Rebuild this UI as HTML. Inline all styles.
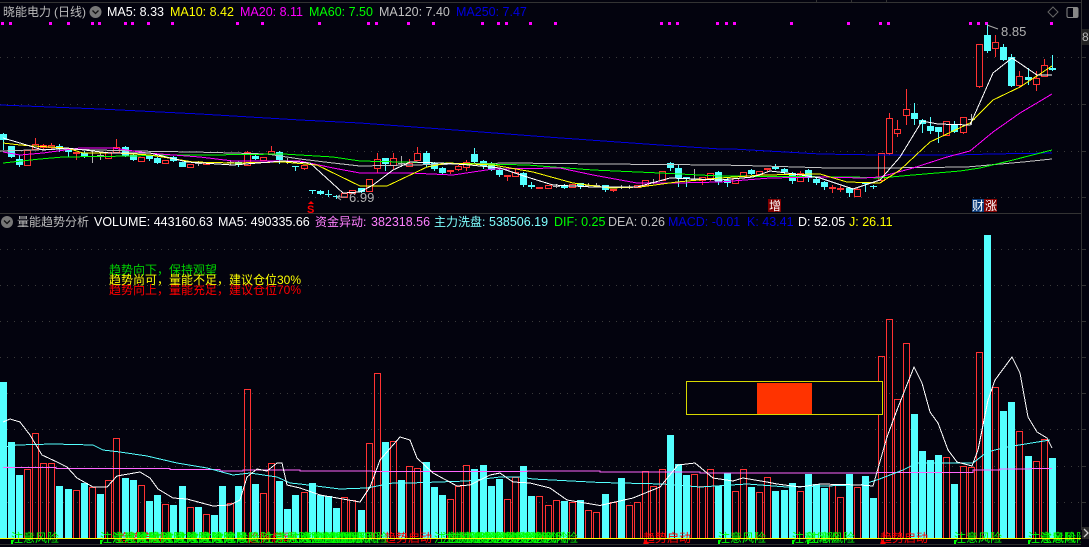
<!DOCTYPE html>
<html lang="zh"><head><meta charset="utf-8"><title>晓能电力</title>
<style>
html,body{margin:0;padding:0;background:#03030e}
body{width:1089px;height:547px;overflow:hidden;position:relative}
svg{position:absolute;left:0;top:0;display:block}
text{font-family:"Liberation Sans","Noto Sans CJK SC",sans-serif;font-size:12px}
.l{font-size:12.5px}
</style></head><body>
<svg width="1089" height="547" viewBox="0 0 1089 547" xmlns="http://www.w3.org/2000/svg">
<rect width="1089" height="547" fill="#03030e"/>
<path d="M0 2.5H1081M816.5 0V3M851.5 0V3M886.5 0V3M0 213.5H1081M1081.5 0V547" stroke="#333" fill="none"/>
<path d="M0 57.5H1081M0 104.5H1081M0 151.5H1081M0 197.5H1081M0 249.5H1081M0 285.5H1081M0 321.5H1081M0 357.5H1081M0 393.5H1081M0 429.5H1081M0 466.5H1081M0 502.5H1081" stroke="#3a3a3a" stroke-dasharray="1 6" fill="none"/>
<path d="M1081 57.5h5M1081 104.5h5M1081 151.5h5M1081 197.5h5M1081 249.5h5M1081 285.5h5M1081 321.5h5M1081 357.5h5M1081 393.5h5M1081 429.5h5M1081 466.5h5M1081 502.5h5" stroke="#333" fill="none"/>
<rect x="1082" y="29" width="7" height="16" fill="#222"/><text x="1082" y="41" fill="#bbb">8</text>
<path fill="#f0f" d="M1 22h3v3H1zM9 22h3v3H9zM49 22h3v3h-3zM67 22h3v3h-3zM91 22h3v3h-3zM98 22h3v3h-3zM124 22h3v3h-3zM131 22h3v3h-3zM147 22h3v3h-3zM171 22h3v3h-3zM236 22h3v3h-3zM261 22h3v3h-3zM318 22h3v3h-3zM367 22h3v3h-3zM375 22h3v3h-3zM407 22h3v3h-3zM432 22h3v3h-3zM481 22h3v3h-3zM497 22h3v3h-3zM505 22h3v3h-3zM529 22h3v3h-3zM554 22h3v3h-3zM660 22h3v3h-3zM668 22h3v3h-3zM676 22h3v3h-3zM716 22h3v3h-3zM725 22h3v3h-3zM733 22h3v3h-3zM790 22h3v3h-3zM847 22h3v3h-3zM879 22h3v3h-3zM887 22h3v3h-3zM969 22h3v3h-3zM977 22h3v3h-3zM985 22h3v3h-3zM1050 22h3v3h-3z"/>
<!-- candle wicks -->
<path stroke="#54ffff" fill="none" d="M3.5 133V150M11.5 146V158M19.5 155V167M59.5 144V152M68.5 148V157M84.5 151V158M125.5 146V157M133.5 154V161M149.5 155V161M157.5 157V164M173.5 156V162M238.5 161V167M255.5 155V160M279.5 151V164M295.5 166V171M312.5 190V194M320.5 190V195M328.5 190V197M336.5 195V199M361.5 188V193M385.5 158V171M426.5 151V167M434.5 162V171M442.5 167V175M474.5 148V164M483.5 160V169M491.5 162V171M499.5 169V177M523.5 172V187M531.5 182V189M564.5 184V189M580.5 183V189M605.5 185V192M670.5 162V171M678.5 164V187M686.5 177V187M718.5 171V185M727.5 178V187M751.5 169V175M775.5 164V170M784.5 168V174M792.5 172V184M808.5 169V182M816.5 178V185M824.5 181V190M849.5 187V197M865.5 182V192M873.5 185V189M914.5 103V125M922.5 119V133M930.5 117V134M938.5 127V143M954.5 121V133M987.5 24V53M1003.5 44V61M1011.5 54V87M1028.5 68V85M1052.5 55V71"/>
<path stroke="#ff3232" fill="none" d="M27.5 150V166M35.5 138V150M43.5 144V150M51.5 143V150M76.5 152V160M116.5 139V153M247.5 151V166M271.5 146V154M304.5 165V170M377.5 153V173M393.5 153V169M409.5 159V166M417.5 147V160M450.5 170V174M458.5 165V171M466.5 160V171M507.5 175V181M515.5 169V177M548.5 185V189M613.5 189V192M702.5 177V185M710.5 173V181M759.5 171V177M767.5 168V172M800.5 171V181M832.5 185V193M840.5 186V192M857.5 187V196M881.5 153V182M889.5 113V155M897.5 120V137M906.5 89V125M946.5 121V136M963.5 117V134M979.5 44V88M995.5 35V57M1019.5 71V88M1036.5 71V91M1044.5 59V77"/>
<path stroke="#b0b0b0" fill="none" d="M92.5 151V163M89 156.5h7M100.5 153V160M97 155.5h7M198.5 161V166M195 163.5h7M230.5 161V165M227 162.5h7M287.5 158V164M284 161.5h7M401.5 156V167M398 163.5h7M556.5 184V188M553 186.5h7M588.5 183V187M585 185.5h7M596.5 183V187M593 185.5h7M621.5 185V189M618 187.5h7M629.5 185V189M626 187.5h7M653.5 179V184M650 182.5h7M694.5 169V181M691 179.5h7M971.5 114V125M968 119.5h7"/>
<!-- candle bodies -->
<path fill="#54ffff" d="M0 134h7v6h-7zM8 146h7v11h-7zM16 159h7v6h-7zM56 146h7v3h-7zM65 149h7v3h-7zM81 153h7v3h-7zM122 147h7v9h-7zM130 155h7v5h-7zM146 156h7v3h-7zM154 158h7v5h-7zM170 157h7v4h-7zM179 162h7v5h-7zM235 162h7v3h-7zM252 156h7v3h-7zM276 152h7v8h-7zM292 166h7v1h-7zM309 190h7v1h-7zM317 191h7v3h-7zM325 194h7v1h-7zM333 196h7v1h-7zM358 188h7v4h-7zM382 158h7v6h-7zM423 153h7v11h-7zM431 163h7v6h-7zM439 168h7v5h-7zM471 154h7v8h-7zM480 161h7v5h-7zM488 163h7v7h-7zM496 170h7v5h-7zM520 173h7v12h-7zM528 185h7v2h-7zM561 185h7v3h-7zM577 183h7v3h-7zM602 185h7v5h-7zM667 163h7v5h-7zM675 168h7v10h-7zM683 177h7v2h-7zM715 172h7v10h-7zM724 180h7v3h-7zM748 170h7v4h-7zM772 167h7v2h-7zM781 169h7v3h-7zM789 173h7v8h-7zM805 170h7v8h-7zM813 179h7v4h-7zM821 182h7v5h-7zM846 188h7v5h-7zM862 182h7v2h-7zM870 186h7v1h-7zM911 113h7v6h-7zM919 120h7v4h-7zM927 126h7v5h-7zM935 127h7v5h-7zM951 124h7v8h-7zM984 35h7v16h-7zM1000 47h7v13h-7zM1008 57h7v29h-7zM1025 77h7v3h-7zM1049 68h7v2h-7z"/>
<path fill="#03030e" stroke="#ff3232" d="M24.5 150.5h6v15h-6zM32.5 144.5h6v5h-6zM40.5 145.5h6v2h-6zM48.5 145.5h6v2h-6zM105.5 152.5h6v6h-6zM113.5 147.5h6v5h-6zM138.5 157.5h6v4h-6zM162.5 160.5h6v3h-6zM187.5 164.5h6v3h-6zM203.5 162.5h6v2h-6zM244.5 152.5h6v13h-6zM260.5 157.5h6v3h-6zM268.5 151.5h6v3h-6zM301.5 165.5h6v3h-6zM341.5 193.5h6v4h-6zM349.5 190.5h6v3h-6zM366.5 179.5h6v12h-6zM374.5 159.5h6v9h-6zM390.5 158.5h6v7h-6zM406.5 163.5h6v3h-6zM414.5 153.5h6v7h-6zM455.5 166.5h6v3h-6zM463.5 162.5h6v5h-6zM512.5 172.5h6v4h-6zM545.5 185.5h6v3h-6zM569.5 184.5h6v3h-6zM634.5 185.5h6v2h-6zM642.5 180.5h6v5h-6zM659.5 171.5h6v9h-6zM699.5 177.5h6v3h-6zM707.5 173.5h6v5h-6zM732.5 178.5h6v5h-6zM740.5 172.5h6v4h-6zM756.5 171.5h6v3h-6zM797.5 173.5h6v8h-6zM854.5 189.5h6v7h-6zM878.5 153.5h6v27h-6zM886.5 118.5h6v35h-6zM894.5 129.5h6v4h-6zM903.5 109.5h6v6h-6zM943.5 121.5h6v14h-6zM960.5 117.5h6v15h-6zM976.5 44.5h6v42h-6zM992.5 42.5h6v6h-6zM1016.5 76.5h6v9h-6zM1033.5 78.5h6v6h-6zM1041.5 65.5h6v11h-6z"/>
<path fill="#ff3232" d="M73 152h7v2h-7zM447 170h7v2h-7zM504 175h7v2h-7zM536 187h7v2h-7zM610 189h7v2h-7zM764 168h7v2h-7zM829 187h7v2h-7zM837 188h7v2h-7z"/>
<!-- MA lines -->
<g fill="none" stroke-width="1" shape-rendering="crispEdges">
<path stroke="#0000e0" d="M0 105L100 109L200 114L300 120L360 123L455 130L547 137L660 145L720 149L733 149L820 154L880 155L957 155L991 154L1052 153"/>
<path stroke="#c0c0c0" d="M0 151L63 149L133 151L193 152L233 153L267 154L300 159L333 163L360 166L510 163L600 164L720 165L763 166L830 168L880 168L967 167L1023 162L1052 159"/>
<path stroke="#00ff00" d="M3 163L40 159L63 157L133 156L167 155L207 155L283 154L333 157L360 161L527 165L593 170L660 173L720 176L853 177L880 178L913 175L960 171L980 168L1013 160L1052 150"/>
<path stroke="#ff00ff" d="M3 152L20 155L43 153L80 148L113 148L147 153L200 157L233 161L300 161L333 168L360 173L410 173L453 175L493 169L560 168L593 175L637 183L677 183L720 182L770 178L820 177L863 178L880 177L913 168L947 157L970 151L993 132L1020 113L1052 94"/>
<path stroke="#ffff00" d="M3 143L20 145L33 146L67 148L83 153L117 153L150 155L193 162L233 163L283 162L317 165L360 186L387 186L427 167L447 163L493 165L533 172L573 183L610 188L640 187L677 182L720 178L763 175L820 174L847 182L880 183L900 170L930 142L970 123L993 100L1020 87L1052 66"/>
<path stroke="#ffffff" d="M3 138L20 143L43 150L67 148L110 153L150 153L187 162L233 165L283 161L310 163L343 193L360 192L373 185L393 170L410 162L440 163L470 165L500 168L527 177L553 185L593 187L637 187L670 178L720 180L753 177L770 171L787 173L820 178L853 189L880 180L900 157L922 121L938 124L970 125L993 73L1012 58L1037 75L1052 75"/>
</g>
<!-- annotations upper -->
<text x="1001" y="36" fill="#b0b0b0" style="font-size:13px">8.85</text>
<path d="M987 25L998 29" stroke="#aaa" fill="none"/>
<text x="349" y="202" fill="#b0b0b0" style="font-size:13px">6.99</text>
<path d="M337 197h10M337 197l3-2M337 197l4 3" stroke="#aaa" fill="none"/>
<path d="M311 201l3 3h-6z" fill="#f00"/><text x="307" y="213" fill="#f00" font-weight="bold" style="font-size:11px">S</text>
<rect x="768" y="199" width="13" height="13" fill="#800000"/><text x="769" y="210" fill="#fff">增</text>
<rect x="972" y="199" width="12" height="13" fill="#0a3a78"/><text x="972" y="210" fill="#fff">财</text>
<rect x="984" y="199" width="13" height="13" fill="#800000"/><text x="985" y="210" fill="#fff">涨</text>
<!-- top legend -->
<text x="3" y="16" fill="#bbb">晓能电力</text><text x="54" y="16" fill="#bbb">(日线)</text>
<circle cx="95.500" cy="12" r="6" fill="#777"/><path d="M92.500 10.500l3 3 3-3" stroke="#111" stroke-width="1.300" fill="none"/>
<text class="l" x="107" y="16" fill="#fff">MA5: 8.33</text>
<text class="l" x="170" y="16" fill="#ff0">MA10: 8.42</text>
<text class="l" x="240" y="16" fill="#f0f">MA20: 8.11</text>
<text class="l" x="309" y="16" fill="#0f0">MA60: 7.50</text>
<text class="l" x="379" y="16" fill="#c0c0c0">MA120: 7.40</text>
<text class="l" x="456" y="16" fill="#0000e0">MA250: 7.47</text>
<path d="M1053 7l5 5-5 5-5-5z" stroke="#666" fill="none"/>
<rect x="1067" y="7.500" width="11" height="10" rx="1.500" fill="none" stroke="#888"/><rect x="1073" y="8" width="5" height="9" fill="#888"/>
<!-- lower legend -->
<circle cx="7" cy="222" r="6" fill="#777"/><path d="M4 220.500l3 3 3-3" stroke="#111" stroke-width="1.300" fill="none"/>
<text x="17" y="226" fill="#bbb">量能趋势分析</text>
<text class="l" x="94" y="226" fill="#fff">VOLUME: 443160.63</text>
<text class="l" x="218" y="226" fill="#fff">MA5: 490335.66</text>
<text x="315" y="226" fill="#ff80ff">资金异动:</text><text class="l" x="371" y="226" fill="#ff80ff">382318.56</text>
<text x="434" y="226" fill="#7fffff">主力洗盘:</text><text class="l" x="489" y="226" fill="#7fffff">538506.19</text>
<text class="l" x="554" y="226" fill="#0f0">DIF: 0.25</text>
<text class="l" x="608" y="226" fill="#c0c0c0">DEA: 0.26</text>
<text class="l" x="668" y="226" fill="#0000e0">MACD: -0.01</text>
<text class="l" x="747" y="226" fill="#0000e0">K: 43.41</text>
<text class="l" x="798" y="226" fill="#fff">D: 52.05</text>
<text class="l" x="849" y="226" fill="#ff0">J: 26.11</text>
<!-- signals -->
<text x="109" y="294" fill="#f00">趋势向上，量能充足，建议仓位70%</text>
<text x="109" y="274" fill="#00d000">趋势向下，保持观望</text>
<text x="109" y="284" fill="#ff0">趋势尚可，量能不足，建议仓位30%</text>
<!-- volume bars -->
<path fill="#54ffff" d="M0 382h7V538h-7zM8 442h7V538h-7zM16 475h7V538h-7zM56 486h7V538h-7zM65 489h7V538h-7zM81 483h7V538h-7zM97 494h7V538h-7zM122 478h7V538h-7zM130 480h7V538h-7zM146 501h7V538h-7zM154 495h7V538h-7zM170 505h7V538h-7zM179 486h7V538h-7zM195 507h7V538h-7zM211 515h7V538h-7zM219 486h7V538h-7zM235 486h7V538h-7zM252 484h7V538h-7zM276 481h7V538h-7zM284 509h7V538h-7zM292 495h7V538h-7zM309 483h7V538h-7zM317 495h7V538h-7zM325 496h7V538h-7zM333 508h7V538h-7zM358 510h7V538h-7zM382 442h7V538h-7zM398 480h7V538h-7zM423 462h7V538h-7zM431 487h7V538h-7zM439 495h7V538h-7zM471 469h7V538h-7zM480 465h7V538h-7zM488 486h7V538h-7zM496 479h7V538h-7zM520 466h7V538h-7zM528 496h7V538h-7zM561 501h7V538h-7zM577 500h7V538h-7zM602 494h7V538h-7zM618 478h7V538h-7zM667 435h7V538h-7zM675 464h7V538h-7zM683 475h7V538h-7zM715 486h7V538h-7zM724 473h7V538h-7zM748 487h7V538h-7zM772 491h7V538h-7zM781 490h7V538h-7zM789 483h7V538h-7zM805 474h7V538h-7zM813 484h7V538h-7zM821 488h7V538h-7zM846 474h7V538h-7zM862 476h7V538h-7zM870 498h7V538h-7zM911 414h7V538h-7zM919 451h7V538h-7zM927 460h7V538h-7zM935 455h7V538h-7zM951 484h7V538h-7zM984 235h7V538h-7zM1000 411h7V538h-7zM1008 402h7V538h-7zM1025 456h7V538h-7zM1049 458h7V538h-7z"/>
<path fill="none" stroke="#ff3232" d="M24.500 538V469.500h6V538M32.500 538V433.500h6V538M40.500 538V463.500h6V538M48.500 538V463.500h6V538M73.500 538V490.500h6V538M89.500 538V487.500h6V538M105.500 538V480.500h6V538M113.500 538V438.500h6V538M138.500 538V485.500h6V538M162.500 538V504.500h6V538M187.500 538V507.500h6V538M203.500 538V514.500h6V538M227.500 538V503.500h6V538M244.500 538V389.500h6V538M260.500 538V493.500h6V538M268.500 538V463.500h6V538M301.500 538V492.500h6V538M341.500 538V497.500h6V538M349.500 538V500.500h6V538M366.500 538V443.500h6V538M374.500 538V373.500h6V538M390.500 538V441.500h6V538M406.500 538V466.500h6V538M414.500 538V468.500h6V538M447.500 538V499.500h6V538M455.500 538V486.500h6V538M463.500 538V465.500h6V538M504.500 538V499.500h6V538M512.500 538V477.500h6V538M536.500 538V496.500h6V538M545.500 538V505.500h6V538M553.500 538V500.500h6V538M569.500 538V502.500h6V538M585.500 538V510.500h6V538M593.500 538V512.500h6V538M610.500 538V502.500h6V538M626.500 538V505.500h6V538M634.500 538V502.500h6V538M642.500 538V471.500h6V538M650.500 538V486.500h6V538M659.500 538V469.500h6V538M691.500 538V474.500h6V538M699.500 538V486.500h6V538M707.500 538V469.500h6V538M732.500 538V491.500h6V538M740.500 538V469.500h6V538M756.500 538V492.500h6V538M764.500 538V477.500h6V538M797.500 538V491.500h6V538M829.500 538V485.500h6V538M837.500 538V497.500h6V538M854.500 538V487.500h6V538M878.500 538V356.500h6V538M886.500 538V319.500h6V538M894.500 538V399.500h6V538M903.500 538V343.500h6V538M943.500 538V457.500h6V538M960.500 538V466.500h6V538M968.500 538V467.500h6V538M976.500 538V352.500h6V538M992.500 538V387.500h6V538M1016.500 538V431.500h6V538M1033.500 538V461.500h6V538M1041.500 538V439.500h6V538"/>
<!-- volume lines -->
<g fill="none" stroke-width="1" shape-rendering="crispEdges">
<path stroke="#ff66ff" d="M3 467.500H56V468.500H170V469.500H220V471H243V470H300V471H373V471.500H527V471H600V472H700V473H877V472.500H973V470H1000V469H1030V468.500H1052"/>
<path stroke="#54ffff" d="M3 447L17 445L53 444L93 445L103 450L120 452L147 456L177 463L207 468L233 475L250 473L277 477L290 483L300 484L340 489L367 488L393 483L410 483L467 481L500 477L520 477L533 479L600 482.500L663 484L700 487L747 484L787 487L860 485L877 480L903 470L917 463L973 463L987 452L1007 447L1050 440"/>
<path stroke="#fff" d="M3 422L10 419L20 422L30 435L42 455L57 462L67 467L77 478L93 487L107 487L117 476L140 472L150 478L158 489L173 498L187 499L213 506L230 505L240 500L247 477L257 469L267 471L277 463L282 463L287 485L300 488L320 495L360 502L370 487L380 460L400 437L410 440L417 458L433 473L457 486L470 485L490 475L500 473L513 482L530 483L550 488L567 500L600 505.500L633 498L660 487L678 465L695 463L713 478L733 481L743 478L767 482L777 484L800 487L820 484L860 485L873 486L887 437L897 410L914 367L922 383L930 412L938 423L948 450L957 462L972 466L978 450L988 400L995 380L1012 357L1020 373L1028 417L1037 432L1047 438L1052 448"/>
</g>
<!-- box -->
<rect x="686.500" y="381.500" width="196" height="33" fill="#03030e" stroke="#d8d800"/>
<rect x="757" y="383" width="55" height="31" fill="#ff3300"/>
<!-- bottom -->
<path d="M0 544.500H1081" stroke="#2e2e2e"/>
<g fill="#f00"><text x="117" y="542">趋势启动</text><text x="247" y="542">趋势启动</text><text x="384" y="542">趋势启动</text><text x="643" y="542">趋势启动</text><text x="880" y="542">趋势启动</text></g>
<g fill="#0f0">
<text x="11" y="542">注意风险</text><text x="100" y="542">注意风险</text><text x="112" y="542">注意风险</text><text x="124" y="542">注意风险</text><text x="137" y="542">注意风险</text><text x="150" y="542">注意风险</text><text x="162" y="542">注意风险</text><text x="175" y="542">注意风险</text><text x="187" y="542">注意风险</text><text x="200" y="542">注意风险</text><text x="212" y="542">注意风险</text><text x="224" y="542">注意风险</text><text x="262" y="542">注意风险</text><text x="275" y="542">注意风险</text><text x="288" y="542">注意风险</text><text x="300" y="542">注意风险</text><text x="308" y="542">注意风险</text><text x="316" y="542">注意风险</text><text x="324" y="542">注意风险</text><text x="332" y="542">注意风险</text><text x="340" y="542">注意风险</text><text x="434" y="542">注意风险</text><text x="442" y="542">注意风险</text><text x="450" y="542">注意风险</text><text x="460" y="542">注意风险</text><text x="470" y="542">注意风险</text><text x="480" y="542">注意风险</text><text x="490" y="542">注意风险</text><text x="500" y="542">注意风险</text><text x="510" y="542">注意风险</text><text x="520" y="542">注意风险</text><text x="530" y="542">注意风险</text><text x="718" y="542">注意风险</text><text x="792" y="542">注意风险</text><text x="807" y="542">注意风险</text><text x="954" y="542">注意风险</text><text x="1028" y="542">注意风险</text><text x="1040" y="542">注意风险</text>
</g>
<path fill="#0f0" d="M11 540h2v4h-2zM100 540h2v4h-2zM718 540h2v4h-2zM792 540h2v4h-2zM807 540h2v4h-2zM954 540h2v4h-2zM1028 540h2v4h-2z"/>
<path fill="#f00" d="M643 544l3-4 3 4zM880 544l3-4 3 4z"/>
<rect x="1081" y="530" width="8" height="17" fill="#03030e"/>
<path d="M0 538.500H1081" stroke="#ff0"/>
<path d="M1082 527h7v12h-7z" fill="#2a2a2a"/><path d="M1084 529l4 4-4 4" stroke="#ccc" fill="none" stroke-width="1.300"/>
</svg>
</body></html>
